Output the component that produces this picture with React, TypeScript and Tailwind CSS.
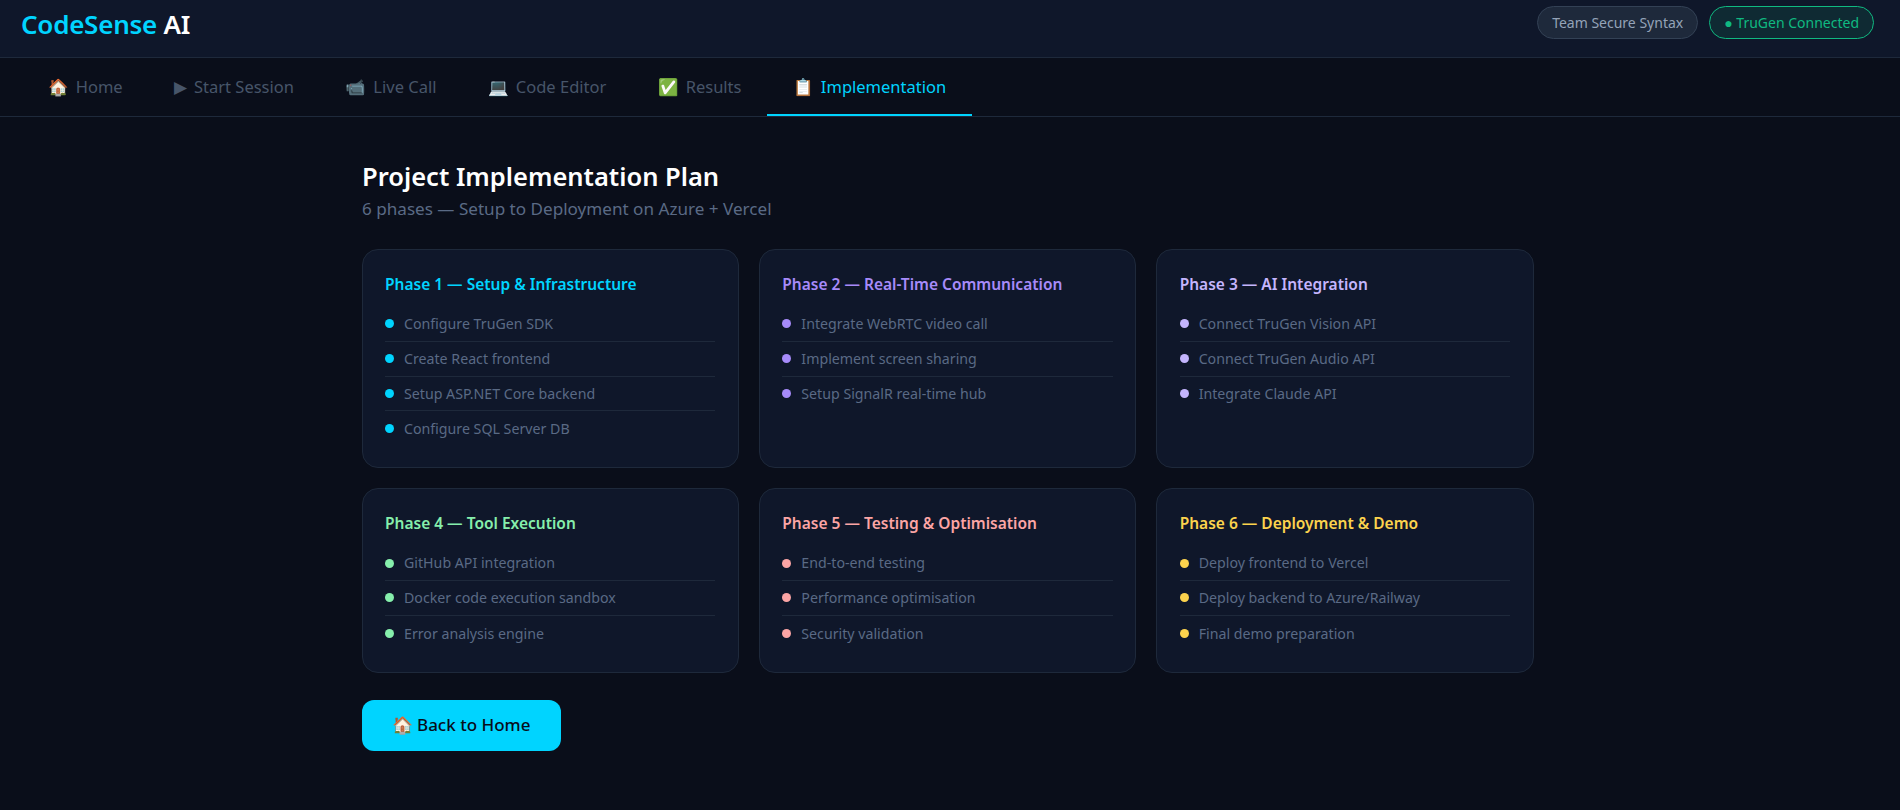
const phases = [
  { title: "Phase 1 — Setup & Infrastructure", color: "text-[#00d4ff]", dot: "bg-[#00d4ff]", items: ["Configure TruGen SDK", "Create React frontend", "Setup ASP.NET Core backend", "Configure SQL Server DB"] },
  { title: "Phase 2 — Real-Time Communication", color: "text-[#a78bfa]", dot: "bg-[#a78bfa]", items: ["Integrate WebRTC video call", "Implement screen sharing", "Setup SignalR real-time hub"] },
  { title: "Phase 3 — AI Integration", color: "text-[#c4b5fd]", dot: "bg-[#c4b5fd]", items: ["Connect TruGen Vision API", "Connect TruGen Audio API", "Integrate Claude API"] },
  { title: "Phase 4 — Tool Execution", color: "text-[#86efac]", dot: "bg-[#86efac]", items: ["GitHub API integration", "Docker code execution sandbox", "Error analysis engine"] },
  { title: "Phase 5 — Testing & Optimisation", color: "text-[#fca5a5]", dot: "bg-[#fca5a5]", items: ["End-to-end testing", "Performance optimisation", "Security validation"] },
  { title: "Phase 6 — Deployment & Demo", color: "text-[#fcd34d]", dot: "bg-[#fcd34d]", items: ["Deploy frontend to Vercel", "Deploy backend to Azure/Railway", "Final demo preparation"] },
];
const tabs = [
  ["🏠", "Home"], ["▶", "Start Session"], ["📹", "Live Call"], ["💻", "Code Editor"], ["✅", "Results"], ["📋", "Implementation"],
];
export default function App() {
  return (
    <div className="min-h-[810px] bg-[#0a0e1a] font-['Noto_Sans',sans-serif] overflow-hidden">
      <header className="h-[58px] bg-[#0f172a] border-b border-[#1e293b] flex justify-between items-start pl-[21px] pr-[26px]">
        <div className="text-[26px] font-semibold leading-[48px] tracking-[-0.25px] text-[#00d4ff]">CodeSense <span className="text-white">AI</span></div>
        <div className="flex gap-[11px] mt-[6px]">
          <span className="h-[33px] px-[14px] rounded-full border border-[#334155] bg-[#1e293b] text-[#94a3b8] text-[14px] leading-[31px]">Team Secure Syntax</span>
          <span className="h-[33px] px-[14px] rounded-full border border-[#10b981] bg-[#0f2a33] text-[#10b981] text-[14px] leading-[31px]">● TruGen Connected</span>
        </div>
      </header>
      <nav className="h-[59px] border-b border-[#1e293b] flex pl-[22px]">
        {tabs.map(([e, t], i) => (
          <div key={t} className={`h-[58px] pt-[3px] px-[25.7px] flex items-center gap-[7px] text-[16.5px] border-b-2 ${i === 5 ? "border-[#00d4ff] text-[#00d4ff]" : "border-transparent text-[#475569]"}`}>
            <span>{e}</span><span>{t}</span>
          </div>
        ))}
      </nav>
      <main className="w-[1172px] ml-[361.5px] pt-[41px]">
        <h1 className="ml-[0.5px] text-[25.5px] font-semibold text-white leading-[36px]">Project Implementation Plan</h1>
        <p className="ml-[0.5px] text-[17.1px] text-[#5a6a85] leading-[24px] mt-[3px] mb-[28px]">6 phases — Setup to Deployment on Azure + Vercel</p>
        <div className="grid grid-cols-3 gap-[20px]">
          {phases.map((p) => (
            <div key={p.title} className="bg-[#0f172a] border border-[#1e293b] rounded-[16px] px-[22.5px] pt-[24px] pb-[21px]">
              <div className={`text-[15.5px] font-semibold leading-[20px] mb-[13px] ${p.color}`}>{p.title}</div>
              {p.items.map((it, i) => (
                <div key={it} className={`flex items-center gap-[10px] h-[34.8px] text-[14.2px] text-[#5a6a85] ${i < p.items.length - 1 ? "border-b border-[#1e293b]" : ""}`}>
                  <span className={`w-[9px] h-[9px] rounded-full ${p.dot}`} />
                  {it}
                </div>
              ))}
            </div>
          ))}
        </div>
        <button className="mt-[27px] h-[51px] w-[199px] rounded-[12px] bg-[#00d4ff] text-[#080d1a] text-[17px] font-medium">🏠 Back to Home</button>
      </main>
    </div>
  );
}
